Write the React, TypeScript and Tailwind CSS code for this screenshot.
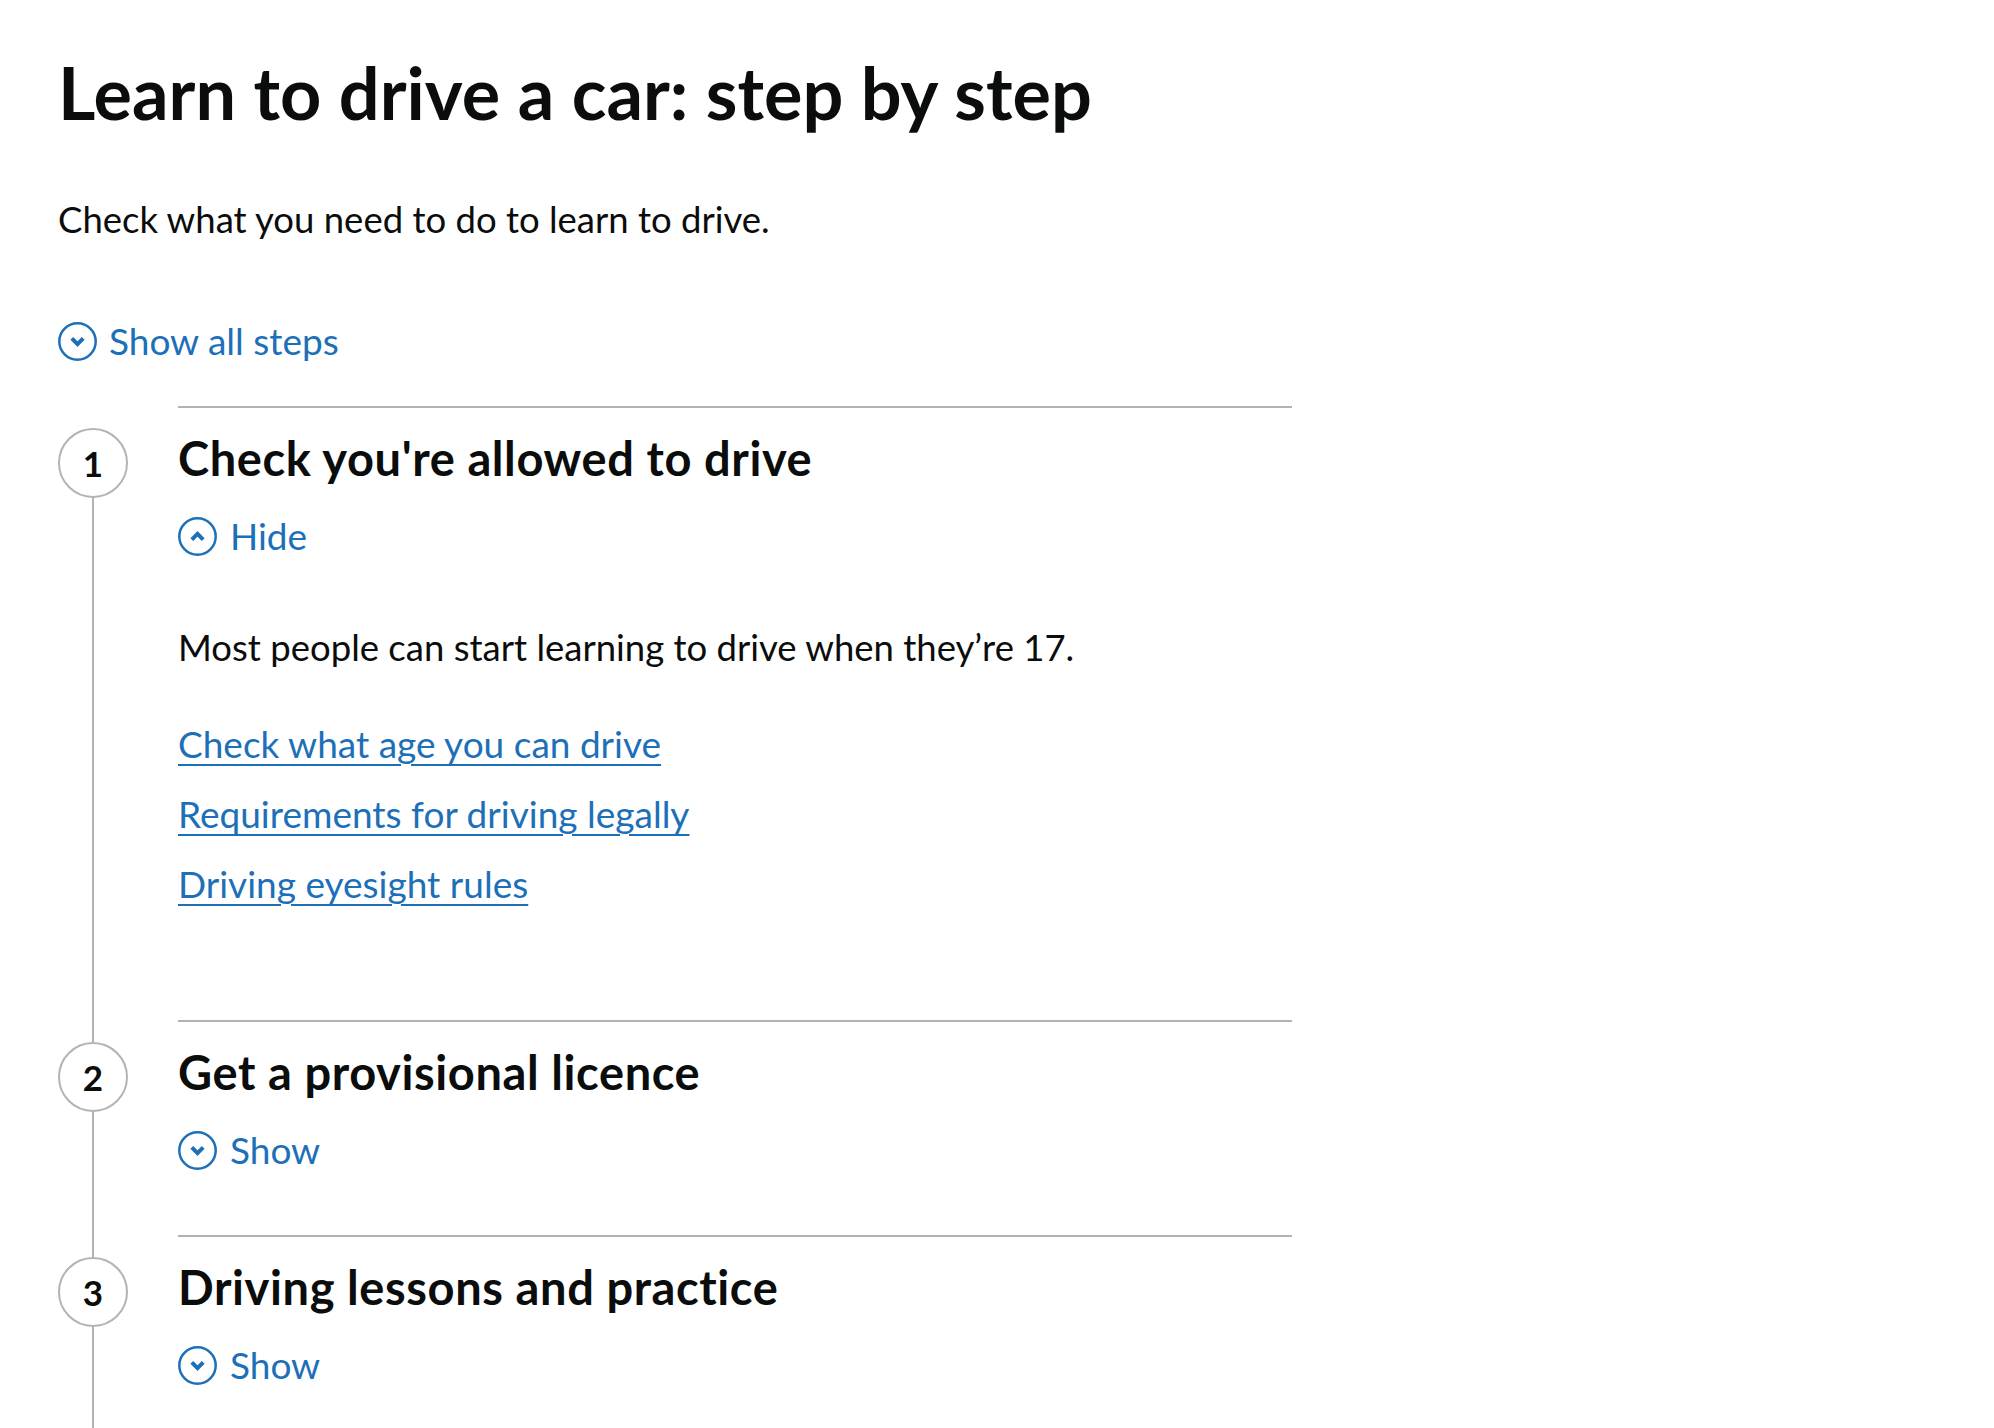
import React from 'react';

type Step = {
  n: number;
  title: string;
  open: boolean;
  body?: string;
  links?: string[];
};

const steps: Step[] = [
  {
    n: 1,
    title: "Check you're allowed to drive",
    open: true,
    body: 'Most people can start learning to drive when they\u2019re 17.',
    links: ['Check what age you can drive', 'Requirements for driving legally', 'Driving eyesight rules'],
  },
  { n: 2, title: 'Get a provisional licence', open: false },
  { n: 3, title: 'Driving lessons and practice', open: false },
];

const ChevronCircle = ({ up }: { up?: boolean }) => (
  <svg width="39" height="39" viewBox="0 0 39 39" className="shrink-0" aria-hidden="true">
    <circle cx="19.5" cy="19.5" r="18.2" fill="none" stroke="#1d70b8" strokeWidth="2.5" />
    <path
      d={up ? 'M13.8 22.6l5.7-5.7 5.7 5.7' : 'M13.8 16.4l5.7 5.7 5.7-5.7'}
      fill="none"
      stroke="#1d70b8"
      strokeWidth="4"
    />
  </svg>
);

const Toggle = ({ label, up }: { label: string; up?: boolean }) => (
  <button className="flex items-center gap-[13px] text-[37px] leading-[50px] text-[#1d70b8] cursor-pointer">
    <ChevronCircle up={up} />
    <span>{label}</span>
  </button>
);

const StepItem = ({ step, first }: { step: Step; first: boolean }) => (
  <li className="flex">
    <div className="w-[70px] shrink-0 flex flex-col items-center">
      <div className={first ? 'h-[22px] w-[2px]' : 'h-[22px] w-[2px] bg-[#b1b4b6]'} />
      <div className="w-[70px] h-[70px] rounded-full border-2 border-[#b1b4b6] flex items-center justify-center text-[35px] font-bold leading-none text-[#0b0c0c]">
        {step.n}
      </div>
      <div className="flex-1 w-[2px] bg-[#b1b4b6]" />
    </div>
    <div
      className={
        step.open
          ? 'ml-[50px] w-[1114px] border-t-2 border-[#b1b4b6] pt-[22px] pb-[111px]'
          : 'ml-[50px] w-[1114px] border-t-2 border-[#b1b4b6] pt-[22px] pb-[60px]'
      }
    >
      <h2 className="text-[47px] leading-[56px] font-bold tracking-[0.6px] text-[#0b0c0c]">{step.title}</h2>
      <div className="mt-[25px]">
        <Toggle label={step.open ? 'Hide' : 'Show'} up={step.open} />
      </div>
      {step.open && (
        <div>
          <p className="mt-[61px] text-[36.5px] leading-[50px] text-[#0b0c0c]">{step.body}</p>
          <ul className="mt-[47px] flex flex-col gap-[20px]">
            {step.links?.map((l) => (
              <li key={l} className="text-[37px] leading-[50px]">
                <a
                  href="#"
                  className="text-[#1d70b8] underline decoration-2 underline-offset-[6px]"
                >
                  {l}
                </a>
              </li>
            ))}
          </ul>
        </div>
      )}
    </div>
  </li>
);

export default function App() {
  return (
    <div className="min-h-screen bg-white font-[Lato,sans-serif] text-[#0b0c0c] pl-[58px] pt-[52px] overflow-hidden">
      <h1 className="text-[72px] leading-[80px] font-bold">Learn to drive a car: step by step</h1>
      <p className="mt-[62px] text-[36.5px] leading-[50px]">Check what you need to do to learn to drive.</p>
      <div className="mt-[72px]">
        <button className="flex items-center gap-[12px] text-[37px] leading-[50px] text-[#1d70b8] cursor-pointer">
          <ChevronCircle />
          <span>Show all steps</span>
        </button>
      </div>
      <ol className="mt-[40px]">
        {steps.map((s, i) => (
          <StepItem key={s.n} step={s} first={i === 0} />
        ))}
      </ol>
    </div>
  );
}
